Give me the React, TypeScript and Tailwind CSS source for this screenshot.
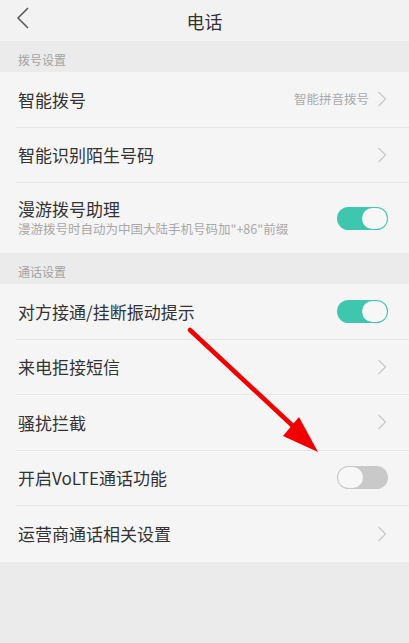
import React from 'react'

const font = { fontFamily: '"Noto Sans CJK SC", "Noto Sans", sans-serif' }

function Chevron() {
    return (
        <svg width="10" height="16" viewBox="0 0 10 16" className="shrink-0">
            <path d="M1.5 1 L8.5 8 L1.5 15" fill="none" stroke="#c8c8c8" strokeWidth="1.2" />
        </svg>
    )
}

function Toggle({ on }: { on: boolean }) {
    return on ? (
        <div className="flex items-center justify-end w-[51px] h-[23px] rounded-full bg-[#3ec6af] pr-[1px]">
            <div className="w-[25px] h-[21px] rounded-full bg-[#f7f7f7]" />
        </div>
    ) : (
        <div className="flex items-center justify-start w-[51px] h-[23px] rounded-full bg-[#c9c9c9] pl-[1px]">
            <div className="w-[25px] h-[21px] rounded-full bg-[#f7f7f7]" />
        </div>
    )
}

function Section({ title }: { title: string }) {
    return (
        <div className="h-[31px] flex items-end pb-[3px] pl-[18px] text-[12px] text-[#a3a3a3] bg-[#ebebeb]">
            {title}
        </div>
    )
}

function Row({ label, right, last }: { label: string; right: React.ReactNode; last?: boolean }) {
    return (
        <div className="pl-4">
            <div className={'h-[55.5px] flex items-center justify-between pr-[22px] ' + (last ? '' : 'border-b border-[#e6e6e6]')}>
                <span className="pl-[2px] text-[17px] text-[#333333]">{label}</span>
                {right}
            </div>
        </div>
    )
}

export default function App() {
    return (
        <div className="relative w-[409px] h-[643px] bg-[#ebebeb] overflow-hidden" style={font}>
            {/* Header */}
            <div className="relative h-[41px] flex items-center justify-center bg-[#f2f2f2]">
                <svg width="14" height="22" viewBox="0 0 14 22" className="absolute left-[16px] top-[7px]">
                    <path d="M12 1 L2 11 L12 21" fill="none" stroke="#555555" strokeWidth="1.5" />
                </svg>
                <span className="text-[18px] text-[#333333] mt-[1px]">电话</span>
            </div>

            <Section title="拨号设置" />
            <div className="bg-[#f5f5f5]">
                <Row
                    label="智能拨号"
                    right={
                        <div className="flex items-center gap-[8px]">
                            <span className="text-[12.5px] text-[#ababab]">智能拼音拨号</span>
                            <Chevron />
                        </div>
                    }
                />
                <Row label="智能识别陌生号码" right={<Chevron />} />
                <div className="pl-4">
                    <div className="h-[70px] flex items-center justify-between pr-[21px]">
                        <div className="pl-[2px] flex flex-col">
                            <span className="text-[17px] leading-[22px] text-[#333333]">漫游拨号助理</span>
                            <span className="text-[12.5px] leading-[18px] text-[#a8a8a8]">漫游拨号时自动为中国大陆手机号码加"+86"前缀</span>
                        </div>
                        <Toggle on />
                    </div>
                </div>
            </div>

            <Section title="通话设置" />
            <div className="bg-[#f5f5f5]">
                <Row label="对方接通/挂断振动提示" right={<div className="-mr-[1px]"><Toggle on /></div>} />
                <Row label="来电拒接短信" right={<Chevron />} />
                <Row label="骚扰拦截" right={<Chevron />} />
                <Row label="开启VoLTE通话功能" right={<div className="-mr-[1px]"><Toggle on={false} /></div>} />
                <Row label="运营商通话相关设置" right={<Chevron />} last />
            </div>

            {/* Red annotation arrow */}
            <svg width="409" height="643" className="absolute left-0 top-0 pointer-events-none">
                <line x1="190" y1="330" x2="294" y2="427" stroke="#f20000" strokeWidth="4.5" strokeLinecap="round" />
                <polygon points="318,452 283,436 299,417" fill="#f20000" />
            </svg>
        </div>
    )
}
